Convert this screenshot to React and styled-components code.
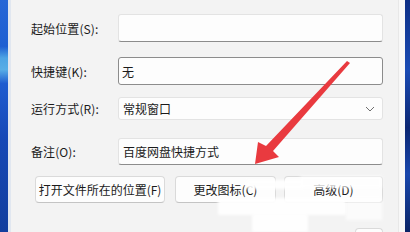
import React from 'react'
import styled, { createGlobalStyle } from 'styled-components'

const Global = createGlobalStyle`
  html, body {
    margin: 0;
    padding: 0;
    background: #f3f3f3;
  }
  body {
    font-family: "Noto Sans CJK SC", "Microsoft YaHei", sans-serif;
  }
`

const Screen = styled.div`
  position: relative;
  display: flex;
  width: 410px;
  height: 232px;
  overflow: hidden;
`

const LeftStrip = styled.div`
  width: 9px;
  background: linear-gradient(
    180deg,
    #2767d6 0%,
    #1e5fd2 20%,
    #4da4e4 25%,
    #58aee6 30%,
    #1f5cd0 36%,
    #1648b6 60%,
    #123e9e 100%
  );
`

const LeftEdge = styled.div`
  width: 3px;
  background: #e1e7f0;
`

const Dialog = styled.div`
  flex: 1;
  background: #f3f3f3;
  padding: 14px 15px 0 20px;
  display: flex;
  flex-direction: column;
`

const RightEdge = styled.div`
  width: 7px;
  background: #f8f8f8;
  border-left: 1px solid #e8e8e8;
`

const RightStrip = styled.div`
  width: 5px;
  background: linear-gradient(180deg, #0d2f86 0%, #1a4bb4 30%, #0b2672 55%, #1947ad 75%, #0a2466 100%);
`

const Row = styled.div`
  display: flex;
  align-items: center;
  margin-top: ${(p) => p.$gap || 0}px;
`

const Label = styled.div`
  width: 87px;
  font-size: 12px;
  color: #1b1b1b;
  letter-spacing: 0.1px;
`

const Field = styled.div`
  flex: 1;
  height: ${(p) => p.$h || 28}px;
  box-sizing: border-box;
  display: flex;
  align-items: center;
  padding-left: 3px;
  padding-right: 6px;
  background: #fdfdfd;
  border: 1px solid ${(p) => (p.$focus ? '#8c8c8c' : '#e3e3e3')};
  border-bottom-color: ${(p) => (p.$flat ? '#e3e3e3' : '#8c8c8c')};
  border-radius: 3px;
  font-size: 12px;
  color: #1b1b1b;
`

const Value = styled.span`
  flex: 1;
`

const Chevron = styled.svg`
  width: 10px;
  height: 6px;
  margin-right: 1px;
`

const Buttons = styled.div`
  display: flex;
  margin-top: 11px;
  padding-left: 4px;
  gap: ${(p) => p.$gap || 8}px;
`

const Button = styled.div`
  width: ${(p) => p.$w}px;
  height: 27px;
  box-sizing: border-box;
  display: flex;
  align-items: center;
  justify-content: center;
  background: #fdfdfd;
  border: 1px solid #dadada;
  border-bottom-color: #c4c4c4;
  border-radius: 4px;
  font-size: 12px;
  color: #1b1b1b;
  margin-left: ${(p) => p.$ml || 0}px;
`

const Footer = styled.div`
  display: flex;
  justify-content: flex-end;
  margin-top: 25px;
`

const Smudge = styled.div`
  position: absolute;
  left: ${(p) => p.$x}px;
  top: ${(p) => p.$y}px;
  width: ${(p) => p.$w}px;
  height: ${(p) => p.$h}px;
  background: #ffffff;
  filter: blur(1.5px);
  opacity: ${(p) => p.$o || 0.95};
`

const Arrow = styled.svg`
  position: absolute;
  left: 0;
  top: 0;
  width: 410px;
  height: 232px;
  pointer-events: none;
`

export default function App() {
  return (
    <Screen>
      <Global />
      <LeftStrip />
      <LeftEdge />
      <Dialog>
        <Row>
          <Label>起始位置(S):</Label>
          <Field />
        </Row>
        <Row $gap={15}>
          <Label>快捷键(K):</Label>
          <Field $focus>
            <Value>无</Value>
          </Field>
        </Row>
        <Row $gap={12}>
          <Label>运行方式(R):</Label>
          <Field $h={23} $flat style={{ paddingLeft: 4 }}>
            <Value>常规窗口</Value>
            <Chevron viewBox="0 0 10 6">
              <path d="M1 1 L5 5 L9 1" fill="none" stroke="#707070" strokeWidth="1" />
            </Chevron>
          </Field>
        </Row>
        <Row $gap={18}>
          <Label>备注(O):</Label>
          <Field $h={27} style={{ paddingLeft: 4 }}>
            <Value>百度网盘快捷方式</Value>
          </Field>
        </Row>
        <Buttons>
          <Button $w={130}>打开文件所在的位置(F)</Button>
          <Button $w={101} $ml={2}>更改图标(C)</Button>
          <Button $w={99}>高级(D)</Button>
        </Buttons>
        <Footer>
          <Button $w={28} />
        </Footer>
      </Dialog>
      <RightEdge />
      <RightStrip />

      <Smudge $x={246} $y={180} $w={58} $h={9} />
      <Smudge $x={218} $y={198} $w={128} $h={17} />
      <Smudge $x={252} $y={214} $w={56} $h={18} />
      <Smudge $x={300} $y={176} $w={82} $h={12} $o={0.8} />
      <Smudge $x={346} $y={198} $w={36} $h={22} $o={0.7} />

      <Arrow viewBox="0 0 410 232">
        <polygon
          points="347,61 350,63 273,151 279,157 255,164 258,142 266,146"
          fill="#e93a3f"
        />
      </Arrow>
    </Screen>
  )
}
